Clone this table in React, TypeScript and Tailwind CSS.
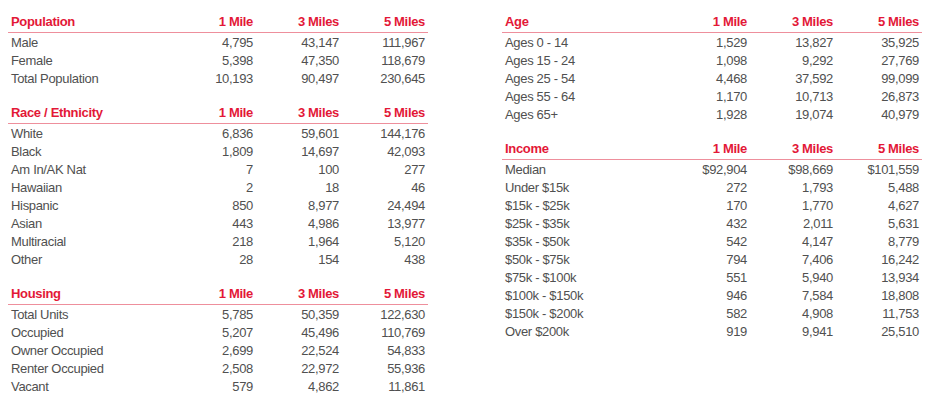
type Row = [string, string, string, string];

type Section = {
  title: string;
  rows: Row[];
};

const leftSections: Section[] = [
  {
    title: "Population",
    rows: [
      ["Male", "4,795", "43,147", "111,967"],
      ["Female", "5,398", "47,350", "118,679"],
      ["Total Population", "10,193", "90,497", "230,645"],
    ],
  },
  {
    title: "Race / Ethnicity",
    rows: [
      ["White", "6,836", "59,601", "144,176"],
      ["Black", "1,809", "14,697", "42,093"],
      ["Am In/AK Nat", "7", "100", "277"],
      ["Hawaiian", "2", "18", "46"],
      ["Hispanic", "850", "8,977", "24,494"],
      ["Asian", "443", "4,986", "13,977"],
      ["Multiracial", "218", "1,964", "5,120"],
      ["Other", "28", "154", "438"],
    ],
  },
  {
    title: "Housing",
    rows: [
      ["Total Units", "5,785", "50,359", "122,630"],
      ["Occupied", "5,207", "45,496", "110,769"],
      ["Owner Occupied", "2,699", "22,524", "54,833"],
      ["Renter Occupied", "2,508", "22,972", "55,936"],
      ["Vacant", "579", "4,862", "11,861"],
    ],
  },
];

const rightSections: Section[] = [
  {
    title: "Age",
    rows: [
      ["Ages 0 - 14", "1,529", "13,827", "35,925"],
      ["Ages 15 - 24", "1,098", "9,292", "27,769"],
      ["Ages 25 - 54", "4,468", "37,592", "99,099"],
      ["Ages 55 - 64", "1,170", "10,713", "26,873"],
      ["Ages 65+", "1,928", "19,074", "40,979"],
    ],
  },
  {
    title: "Income",
    rows: [
      ["Median", "$92,904", "$98,669", "$101,559"],
      ["Under $15k", "272", "1,793", "5,488"],
      ["$15k - $25k", "170", "1,770", "4,627"],
      ["$25k - $35k", "432", "2,011", "5,631"],
      ["$35k - $50k", "542", "4,147", "8,779"],
      ["$50k - $75k", "794", "7,406", "16,242"],
      ["$75k - $100k", "551", "5,940", "13,934"],
      ["$100k - $150k", "946", "7,584", "18,808"],
      ["$150k - $200k", "582", "4,908", "11,753"],
      ["Over $200k", "919", "9,941", "25,510"],
    ],
  },
];

const grid = "grid grid-cols-[1fr_86px_86px_86px] px-[3px]";

const DataTable = ({ section }: { section: Section }) => (
  <div className="mt-4 first:mt-0">
    <div
      className={`${grid} h-[21px] border-b border-[#ee8f9c] text-[13px] font-bold leading-[20px] tracking-[-0.025em] text-[#e31837]`}
    >
      <span>{section.title}</span>
      <span className="text-right">1 Mile</span>
      <span className="text-right">3 Miles</span>
      <span className="text-right">5 Miles</span>
    </div>
    {section.rows.map((row) => (
      <div
        key={row[0]}
        className={`${grid} h-[18px] text-[13px] leading-[19px] tracking-[-0.025em] text-[#505050]`}
      >
        <span>{row[0]}</span>
        <span className="text-right">{row[1]}</span>
        <span className="text-right">{row[2]}</span>
        <span className="text-right">{row[3]}</span>
      </div>
    ))}
  </div>
);

export default function App() {
  return (
    <div
      className="flex h-[406px] w-[931px] gap-[74px] bg-white pl-2 pt-3"
      style={{ fontFamily: '"Liberation Sans", Arial, sans-serif' }}
    >
      <div className="flex w-[420px] flex-col">
        {leftSections.map((s) => (
          <DataTable key={s.title} section={s} />
        ))}
      </div>
      <div className="flex w-[420px] flex-col">
        {rightSections.map((s) => (
          <DataTable key={s.title} section={s} />
        ))}
      </div>
    </div>
  );
}
